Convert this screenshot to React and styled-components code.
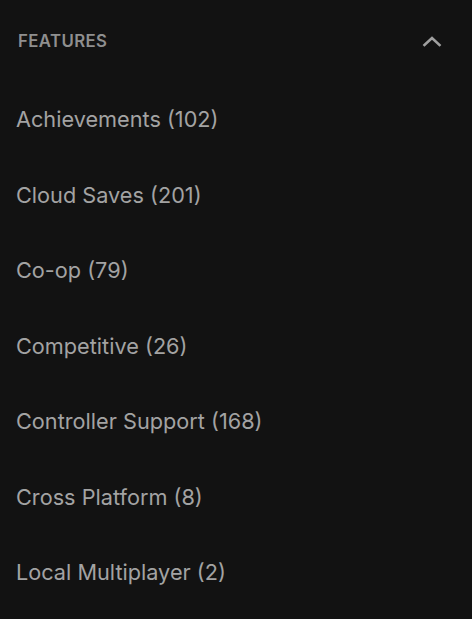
import React from "react";
import styled, { createGlobalStyle } from "styled-components";

const Global = createGlobalStyle`
  html, body { margin: 0; padding: 0; background: #121212; }
  body { font-family: Inter, "Noto Sans", sans-serif; -webkit-font-smoothing: antialiased; }
`;

const Panel = styled.section`
  width: 472px;
  min-height: 619px;
  background: #121212;
  box-sizing: border-box;
`;

const Header = styled.button`
  all: unset;
  box-sizing: border-box;
  width: 100%;
  height: 81.5px;
  display: flex;
  align-items: center;
  justify-content: space-between;
  padding: 0 30px 0 18px;
  cursor: pointer;
`;

const Title = styled.span`
  font-family: Inter, sans-serif;
  font-size: 16.8px;
  font-weight: 600;
  letter-spacing: 0.4px;
  color: #8f8f8f;
  text-transform: uppercase;
`;

const List = styled.ul`
  list-style: none;
  margin: 0;
  padding: 0;
`;

const Item = styled.li`
  height: 75.5px;
  display: flex;
  align-items: center;
  padding-left: 16px;
  font-family: Inter, sans-serif;
  font-size: 21.7px;
  font-weight: 400;
  color: #a3a3a3;
`;

const Chevron = () => (
  <svg width="20" height="12" viewBox="0 0 20 12" fill="none">
    <polyline points="2.5,10 10,3 17.5,10" stroke="#a0a0a0" strokeWidth="2.6" strokeLinecap="square" strokeLinejoin="miter" />
  </svg>
);

const items = [
  "Achievements (102)",
  "Cloud Saves (201)",
  "Co-op (79)",
  "Competitive (26)",
  "Controller Support (168)",
  "Cross Platform (8)",
  "Local Multiplayer (2)",
];

export default function App() {
  return (
    <>
      <Global />
      <Panel>
        <Header>
          <Title>Features</Title>
          <Chevron />
        </Header>
        <List>
          {items.map((t) => (
            <Item key={t}>{t}</Item>
          ))}
        </List>
      </Panel>
    </>
  );
}
